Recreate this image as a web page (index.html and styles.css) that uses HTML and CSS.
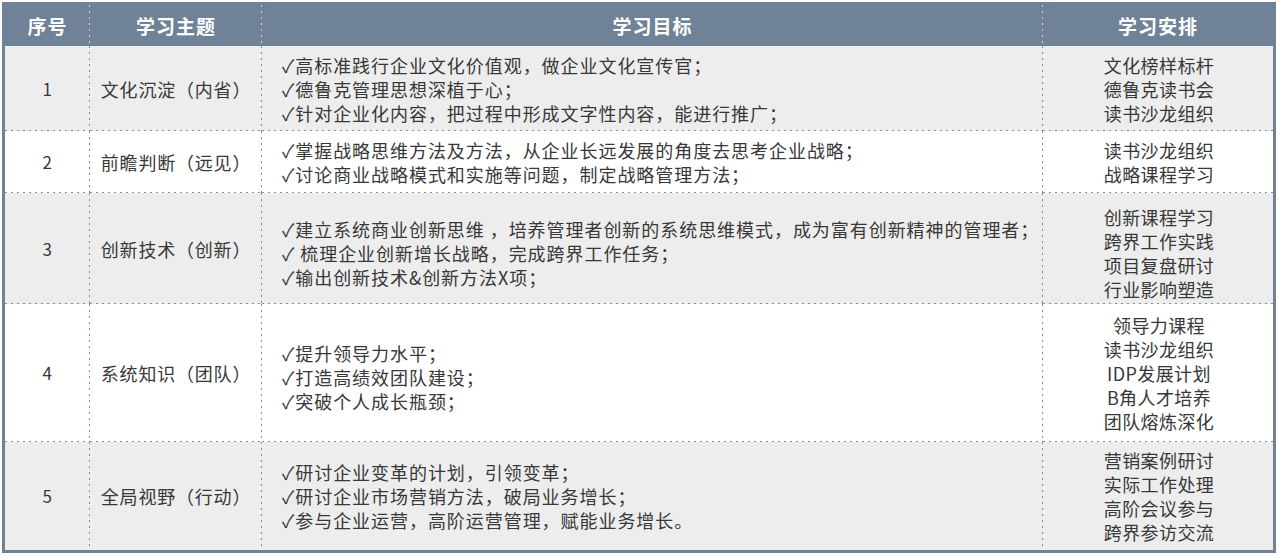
FILE: index.html
```html
<!DOCTYPE html>
<html lang="zh-CN">
<head>
<meta charset="utf-8">
<title>学习计划</title>
<link rel="stylesheet" href="styles.css">
</head>
<body>
<div class="table">
  <div class="cell head">序号</div>
  <div class="cell head">学习主题</div>
  <div class="cell head">学习目标</div>
  <div class="cell head last">学习安排</div>

  <div class="cell grey num">1</div>
  <div class="cell grey topic">文化沉淀（内省）</div>
  <div class="cell grey goal">
    <p>✓高标准践行企业文化价值观，做企业文化宣传官；</p>
    <p>✓德鲁克管理思想深植于心；</p>
    <p>✓针对企业化内容，把过程中形成文字性内容，能进行推广；</p>
  </div>
  <div class="cell grey plan last">
    <p>文化榜样标杆</p><p>德鲁克读书会</p><p>读书沙龙组织</p>
  </div>

  <div class="cell white num">2</div>
  <div class="cell white topic">前瞻判断（远见）</div>
  <div class="cell white goal">
    <p>✓掌握战略思维方法及方法，从企业长远发展的角度去思考企业战略；</p>
    <p>✓讨论商业战略模式和实施等问题，制定战略管理方法；</p>
  </div>
  <div class="cell white plan last">
    <p>读书沙龙组织</p><p>战略课程学习</p>
  </div>

  <div class="cell grey num">3</div>
  <div class="cell grey topic">创新技术（创新）</div>
  <div class="cell grey goal shift">
    <p>✓建立系统商业创新思维 ，培养管理者创新的系统思维模式，成为富有创新精神的管理者；</p>
    <p>✓ 梳理企业创新增长战略，完成跨界工作任务；</p>
    <p>✓输出创新技术&amp;创新方法X项；</p>
  </div>
  <div class="cell grey plan last shift">
    <p>创新课程学习</p><p>跨界工作实践</p><p>项目复盘研讨</p><p>行业影响塑造</p>
  </div>

  <div class="cell white num">4</div>
  <div class="cell white topic">系统知识（团队）</div>
  <div class="cell white goal shift">
    <p>✓提升领导力水平；</p>
    <p>✓打造高绩效团队建设；</p>
    <p>✓突破个人成长瓶颈；</p>
  </div>
  <div class="cell white plan last">
    <p>领导力课程</p><p>读书沙龙组织</p><p>IDP发展计划</p><p>B角人才培养</p><p>团队熔炼深化</p>
  </div>

  <div class="cell grey num bottom">5</div>
  <div class="cell grey topic bottom">全局视野（行动）</div>
  <div class="cell grey goal bottom">
    <p>✓研讨企业变革的计划，引领变革；</p>
    <p>✓研讨企业市场营销方法，破局业务增长；</p>
    <p>✓参与企业运营，高阶运营管理，赋能业务增长。</p>
  </div>
  <div class="cell grey plan last bottom">
    <p>营销案例研讨</p><p>实际工作处理</p><p>高阶会议参与</p><p>跨界参访交流</p>
  </div>
</div>
</body>
</html>
```

FILE: styles.css
```css
html, body {
  margin: 0;
  padding: 0;
  background: #ffffff;
}

body {
  font-family: "Noto Sans CJK SC", "Noto Sans", "DejaVu Sans", sans-serif;
  color: #383838;
}

.table {
  --dot: #7d8fa8;
  --hdot: #c9d2de;
  margin: 2px 0 0 2px;
  width: 1268px;
  border: 3px solid #6f8297;
  display: grid;
  grid-template-columns: 85px 172px 781px 230px;
  grid-template-rows: 41px 85px 62px 111px 138px 108px;
}

.cell {
  display: flex;
  flex-direction: column;
  justify-content: center;
  align-items: center;
  font-size: 18px;
  letter-spacing: 0.4px;
  line-height: 24px;
  background:
    linear-gradient(to bottom, var(--dot) 2px, transparent 2px) right top / 1px 6px repeat-y,
    linear-gradient(to right, var(--dot) 2px, transparent 2px) left bottom / 6px 1px repeat-x,
    var(--bg);
}

.cell p {
  margin: 0;
  white-space: nowrap;
}

.grey { --bg: #ededed; }
.white { --bg: #ffffff; }

.head {
  --bg: #6f8297;
  color: #ffffff;
  font-weight: 700;
  font-size: 19px;
  letter-spacing: 1px;
  background:
    linear-gradient(to bottom, var(--hdot) 2px, transparent 2px) right top / 1px 6px repeat-y,
    var(--bg);
}

.cell.last {
  background:
    linear-gradient(to right, var(--dot) 2px, transparent 2px) left bottom / 6px 1px repeat-x,
    var(--bg);
}

.head.last { background: var(--bg); }

.cell.bottom {
  background:
    linear-gradient(to bottom, var(--dot) 2px, transparent 2px) right top / 1px 6px repeat-y,
    var(--bg);
}

.cell.last.bottom {
  background: var(--bg);
}

.num {
  font-size: 17px;
}

.topic {
  letter-spacing: 0.8px;
}

.goal {
  align-items: flex-start;
  padding-left: 20px;
  letter-spacing: 0.95px;
}

.shift {
  padding-top: 8px;
}

.plan {
  padding-left: 2px;
}
```
